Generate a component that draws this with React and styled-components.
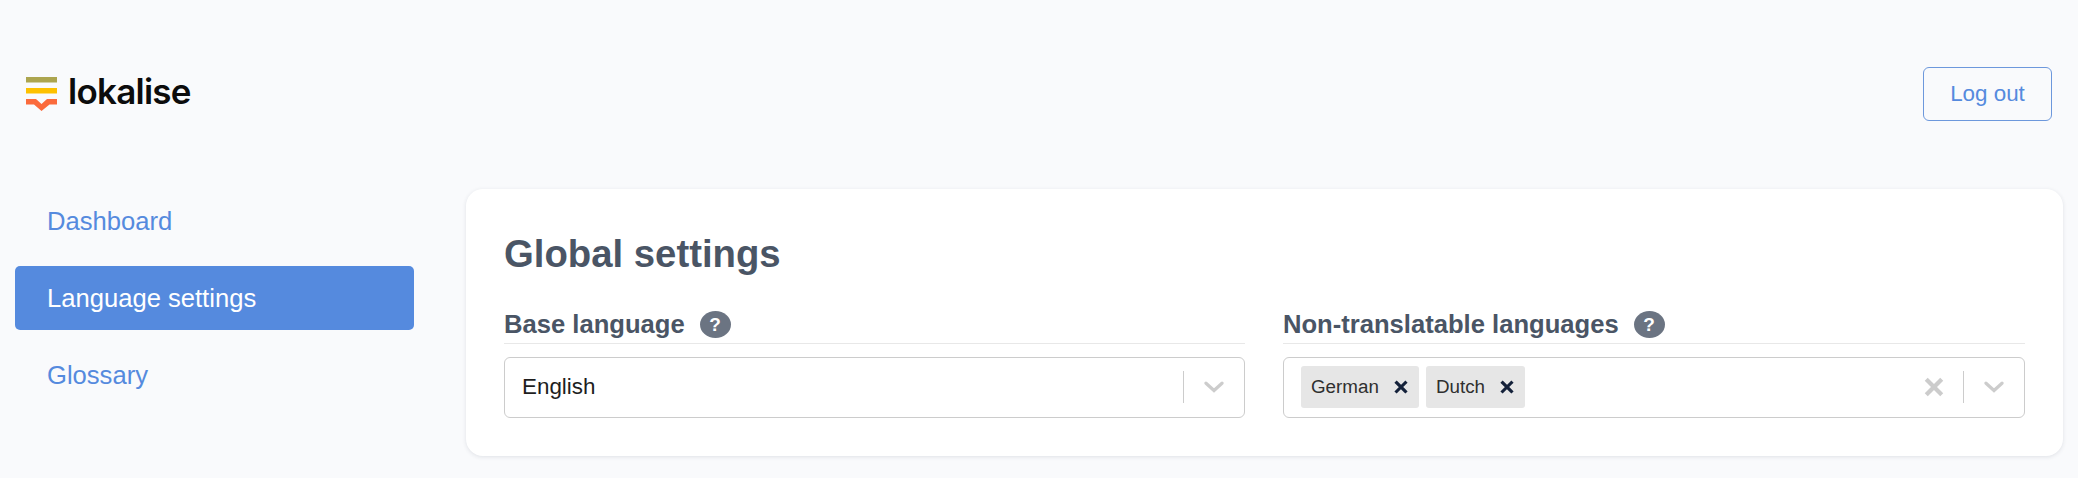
import React from "react";
import styled, { createGlobalStyle } from "styled-components";

const Global = createGlobalStyle`
  html, body { margin: 0; padding: 0; background: #f9fafc; }
  body { font-family: "Liberation Sans", Arial, sans-serif; }
  * { box-sizing: border-box; }
`;

const Page = styled.div`
  width: 2078px;
  height: 478px;
  padding: 67px 15px 0;
  overflow: hidden;
  background: #f9fafc;
`;

const Header = styled.header`
  display: flex;
  align-items: flex-start;
  justify-content: space-between;
  height: 54px;
  padding: 6px 11px 0 10px;
`;

const LogoWrap = styled.div`
  display: flex;
  align-items: center;
  gap: 10px;
`;

const LogoText = styled.span`
  padding-bottom: 5px;
  font-family: "Inter", sans-serif;
  font-weight: 600;
  font-size: 35px;
  line-height: 36px;
  letter-spacing: -0.75px;
  color: #0c0c0c;
`;

const LogoutButton = styled.button`
  width: 129px;
  height: 54px;
  margin-top: -6px;
  border: 1px solid #6d98dc;
  border-radius: 6px;
  background: transparent;
  color: #558ade;
  font-family: inherit;
  font-size: 22.4px;
`;

const Body = styled.div`
  display: flex;
  align-items: flex-start;
  gap: 52px;
  margin-top: 68px;
`;

const Nav = styled.nav`
  display: flex;
  flex-direction: column;
  gap: 13px;
  width: 399px;
  flex: none;
`;

const NavItem = styled.a`
  display: flex;
  align-items: center;
  height: 64px;
  padding-left: 32px;
  border-radius: 5px;
  font-size: 25.6px;
  color: ${(p) => (p.$active ? "#ffffff" : "#558ade")};
  background: ${(p) => (p.$active ? "#558ade" : "transparent")};
`;

const Card = styled.section`
  width: 1597px;
  height: 267px;
  padding: 37px 38px 0;
  background: #ffffff;
  border-radius: 17px;
  box-shadow: 0 1px 4px rgba(40, 50, 70, 0.12);
`;

const Title = styled.h1`
  margin: 0;
  height: 56px;
  font-size: 38.3px;
  line-height: 56px;
  font-weight: 700;
  color: #4a5565;
`;

const Columns = styled.div`
  display: grid;
  grid-template-columns: 741px 742px;
  gap: 38px;
  margin-top: 15px;
`;

const Field = styled.div`
  display: flex;
  flex-direction: column;
`;

const LabelRow = styled.div`
  display: flex;
  align-items: center;
  gap: 15px;
  height: 47px;
  padding-top: 9px;
  border-bottom: 1px solid #e8e8e8;
  font-size: 25.6px;
  font-weight: 700;
  color: #4a5565;
`;

const Help = styled.span`
  display: inline-flex;
  align-items: center;
  justify-content: center;
  width: 31px;
  height: 27px;
  border-radius: 50%;
  background: #6b7482;
  color: #ffffff;
  font-size: 19px;
  font-weight: 700;
`;

const Select = styled.div`
  display: flex;
  align-items: center;
  height: 61px;
  margin-top: 13px;
  padding: 0 0 1px 17px;
  border: 1px solid #cccccc;
  border-radius: 6px;
  background: #fff;
`;

const Value = styled.div`
  flex: 1;
  display: flex;
  align-items: center;
  gap: 7px;
  font-size: 22.4px;
  color: #1e1e1e;
`;

const Tag = styled.span`
  display: inline-flex;
  align-items: center;
  justify-content: space-between;
  height: 42px;
  width: ${(p) => p.$w}px;
  padding: 0 11px 0 10px;
  border-radius: 3px;
  background: #e6e6e6;
  font-size: 18.8px;
  color: #2f2f2f;
`;

const Controls = styled.div`
  display: flex;
  align-items: center;
`;

const Divider = styled.span`
  width: 1px;
  height: 32px;
  margin: 0 20px 0 19px;
  background: #cccccc;
`;

const Clear = styled.span`
  display: flex;
`;

const Chevron = styled.span`
  display: flex;
  margin-right: 20px;
`;

const TagX = styled.svg`
  display: block;
`;

const XIcon = ({ size, color, w }) => (
  <TagX width={size} height={size} viewBox="0 0 16 16" fill="none">
    <path d="M3 3 13 13M13 3 3 13" stroke={color} strokeWidth={w} strokeLinecap="square" />
  </TagX>
);

const ChevronIcon = () => (
  <svg width="20" height="12" viewBox="0 0 20 12" fill="none">
    <path d="M2 2.2 10 9.5 18 2.2" stroke="#cccccc" strokeWidth="3.2" strokeLinecap="round" strokeLinejoin="miter" />
  </svg>
);

const Logo = () => (
  <svg width="33" height="38" viewBox="0 0 33 38">
    <rect x="1" y="2" width="31" height="5.5" fill="#aca54f" />
    <rect x="1" y="13" width="31" height="5.5" fill="#fdc100" />
    <path d="M1 24h10l5.5 5 5.5-5h10v5.5h-7.5L16.5 36 9 29.5H1z" fill="#fb6a3c" />
  </svg>
);

export default function App() {
  return (
    <>
      <Global />
      <Page>
        <Header>
          <LogoWrap>
            <Logo />
            <LogoText>lokalise</LogoText>
          </LogoWrap>
          <LogoutButton>Log out</LogoutButton>
        </Header>
        <Body>
          <Nav>
            <NavItem>Dashboard</NavItem>
            <NavItem $active>Language settings</NavItem>
            <NavItem>Glossary</NavItem>
          </Nav>
          <Card>
            <Title>Global settings</Title>
            <Columns>
              <Field>
                <LabelRow>
                  Base language <Help>?</Help>
                </LabelRow>
                <Select>
                  <Value>English</Value>
                  <Controls>
                    <Divider />
                    <Chevron><ChevronIcon /></Chevron>
                  </Controls>
                </Select>
              </Field>
              <Field>
                <LabelRow>
                  Non-translatable languages <Help>?</Help>
                </LabelRow>
                <Select>
                  <Value>
                    <Tag $w={118}>German <XIcon size={14} color="#14213a" w={3.6} /></Tag>
                    <Tag $w={99}>Dutch <XIcon size={14} color="#14213a" w={3.6} /></Tag>
                  </Value>
                  <Controls>
                    <Clear><XIcon size={20} color="#cccccc" w={3.4} /></Clear>
                    <Divider />
                    <Chevron><ChevronIcon /></Chevron>
                  </Controls>
                </Select>
              </Field>
            </Columns>
          </Card>
        </Body>
      </Page>
    </>
  );
}
